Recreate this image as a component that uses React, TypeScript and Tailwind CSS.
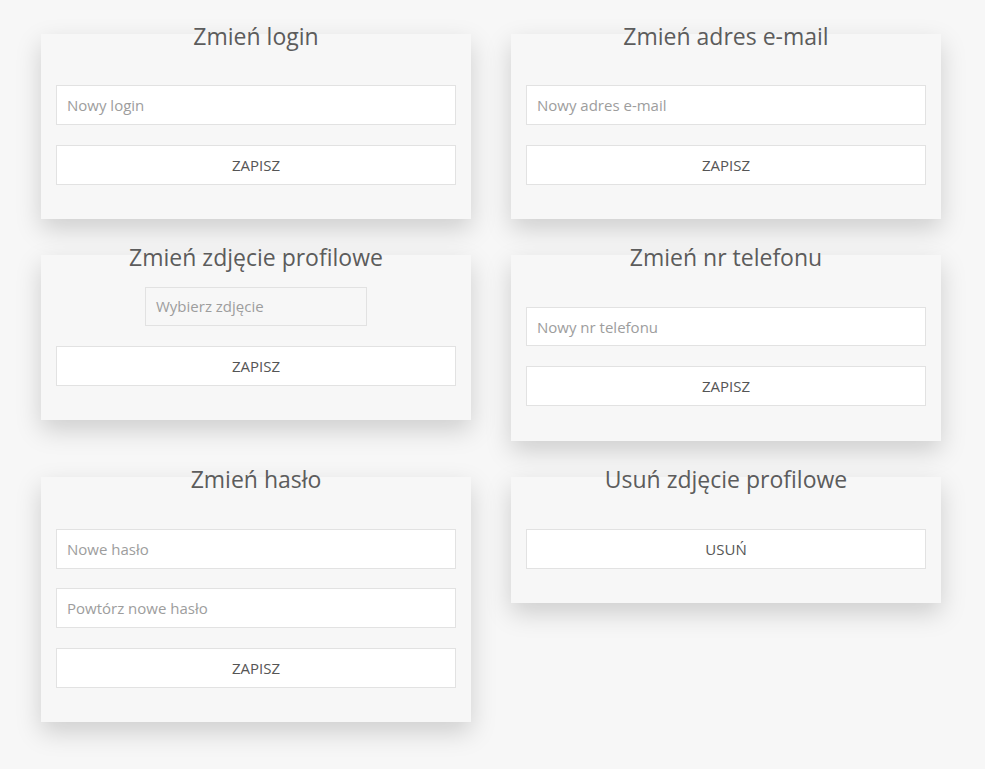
import React from "react";

const font = { fontFamily: '"Open Sans", "Noto Sans", sans-serif' };

function Card({ title, children, tall }: { title: string; children: React.ReactNode; tall?: boolean }) {
  return (
    <div
      className={
        tall
          ? "bg-[#f7f7f7] shadow-[0_10px_24px_rgba(0,0,0,0.17)] px-[15px] pb-[35px]"
          : "bg-[#f7f7f7] shadow-[0_10px_24px_rgba(0,0,0,0.17)] px-[15px] pb-[34px]"
      }
    >
      <h2 className="-mt-[14px] text-center text-[23px] leading-[32px] text-[#5c5c5c]">{title}</h2>
      {children}
    </div>
  );
}

function Field({ placeholder, short }: { placeholder: string; short?: boolean }) {
  return (
    <input
      type="text"
      placeholder={placeholder}
      className={
        short
          ? "block w-full h-[39px] bg-white border border-[#e2e2e2] px-[10px] text-[15px] text-[#555] placeholder:text-[#9d9d9d] outline-none"
          : "block w-full h-10 bg-white border border-[#e2e2e2] px-[10px] text-[15px] text-[#555] placeholder:text-[#9d9d9d] outline-none"
      }
    />
  );
}

function Button({ label }: { label: string }) {
  return (
    <button className="block w-full h-10 bg-white border border-[#e2e2e2] text-[15px] text-[#555] uppercase">
      {label}
    </button>
  );
}

export default function App() {
  return (
    <div className="min-h-screen bg-[#f7f7f7] pt-[34px] pb-10 px-[41px]" style={font}>
      <div className="grid grid-cols-[430px_430px] gap-x-10 gap-y-9 items-start">
        <Card title="Zmień login">
          <div className="mt-[33px] flex flex-col gap-5">
            <Field placeholder="Nowy login" />
            <Button label="Zapisz" />
          </div>
        </Card>
        <Card title="Zmień adres e-mail">
          <div className="mt-[33px] flex flex-col gap-5">
            <Field placeholder="Nowy adres e-mail" />
            <Button label="Zapisz" />
          </div>
        </Card>
        <Card title="Zmień zdjęcie profilowe">
          <div className="mt-[14px] flex flex-col gap-5">
            <label className="mx-auto w-[222px] h-[39px] flex items-center border border-[#e2e2e2] px-[10px] text-[15px] text-[#9d9d9d] cursor-pointer">
              <input type="file" accept="image/*" className="hidden" />
              Wybierz zdjęcie
            </label>
            <Button label="Zapisz" />
          </div>
        </Card>
        <Card title="Zmień nr telefonu" tall>
          <div className="mt-[34px] flex flex-col gap-5">
            <Field placeholder="Nowy nr telefonu" short />
            <Button label="Zapisz" />
          </div>
        </Card>
        <Card title="Zmień hasło">
          <div className="mt-[34px] flex flex-col">
            <Field placeholder="Nowe hasło" />
            <div className="mt-[19px]">
              <Field placeholder="Powtórz nowe hasło" />
            </div>
            <div className="mt-5">
              <Button label="Zapisz" />
            </div>
          </div>
        </Card>
        <Card title="Usuń zdjęcie profilowe">
          <div className="mt-[34px] flex flex-col gap-5">
            <Button label="Usuń" />
          </div>
        </Card>
      </div>
    </div>
  );
}
